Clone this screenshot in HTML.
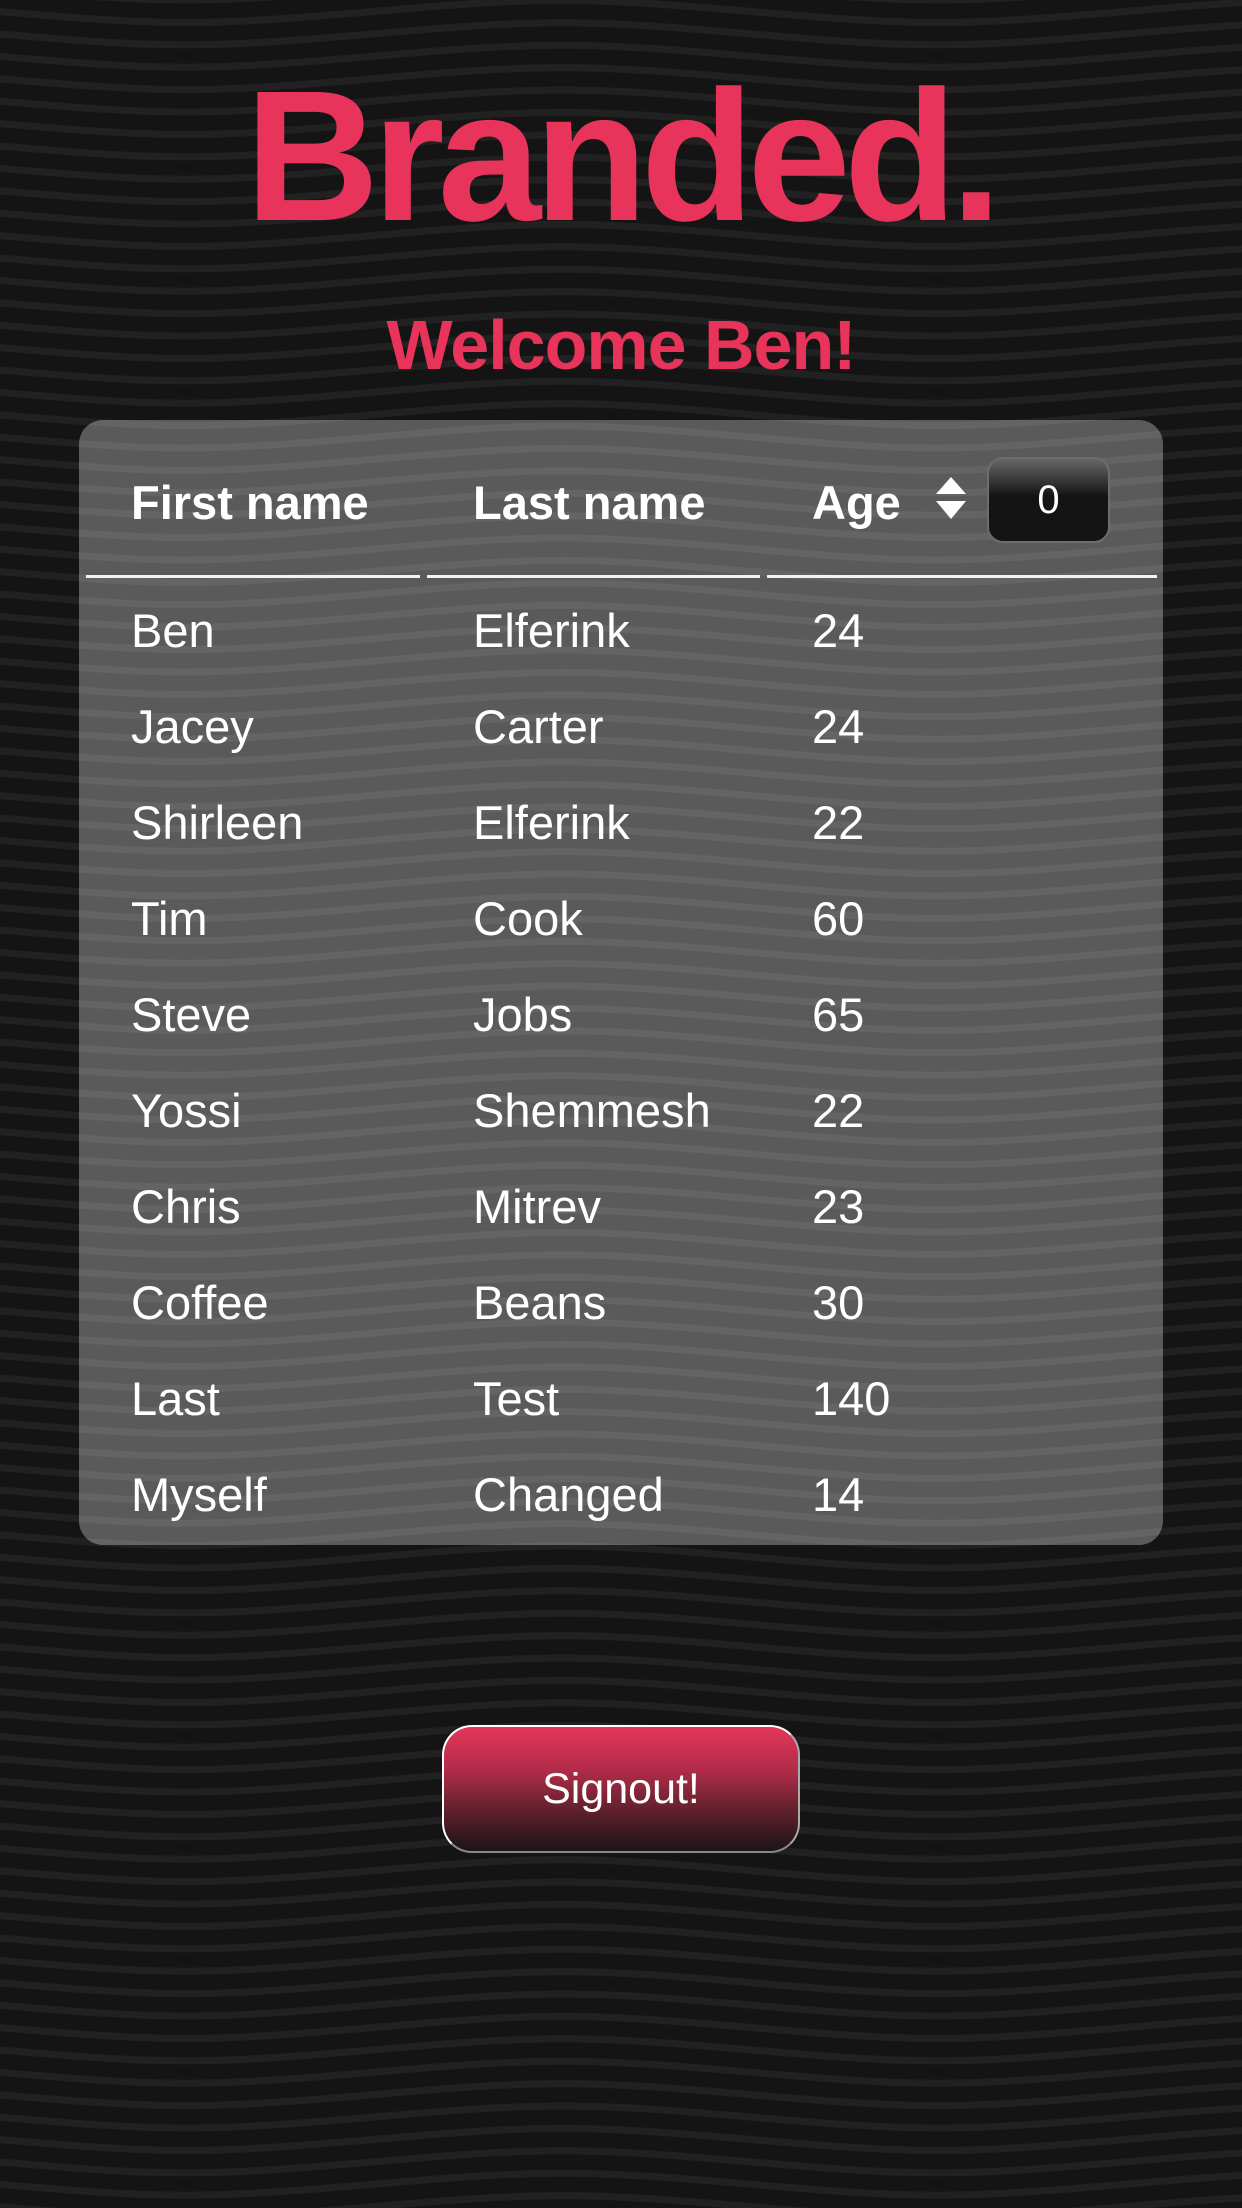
<!DOCTYPE html>
<html><head><meta charset="utf-8"><style>
html,body{margin:0;padding:0}
body{width:1242px;height:2208px;position:relative;overflow:hidden;background:#151415;font-family:"Liberation Sans",sans-serif;color:#fff}
svg.bg{position:absolute;left:0;top:0}
.logo{position:absolute;left:245px;top:67px;width:752px;height:180px;font-weight:bold;font-size:186px;line-height:180px;color:#e8345a;letter-spacing:-7px;white-space:nowrap}
.welcome{position:absolute;left:0;width:1242px;top:305px;text-align:center;font-weight:bold;font-size:70px;line-height:80px;color:#e8345a;letter-spacing:-1px}
.t{position:absolute;font-size:47px;line-height:50px;white-space:nowrap}
.h{font-weight:bold;font-size:47px}
.line{position:absolute;top:575px;height:3px;background:#f2f2f2}
.inp{position:absolute;left:987px;top:457px;width:123px;height:86px;border-radius:16px;border:2px solid #6d6d6d;box-sizing:border-box;background:linear-gradient(#666 0%,#3a3a3a 25%,#141414 45%,#141414 100%);font-size:40px;line-height:82px;text-align:center}
.btn{position:absolute;left:442px;top:1725px;width:358px;height:128px;box-sizing:border-box;border-radius:30px;border:2px solid #fff;border-bottom-color:#888;border-right-color:#aaa;background:linear-gradient(#e5365a 0%,#b02c48 35%,#5a1f2b 70%,#1a1517 100%);font-size:43px;line-height:124px;text-align:center}
</style></head><body>
<svg class="bg" width="1242" height="2208">
<defs>
<pattern id="w" width="752" height="224" patternUnits="userSpaceOnUse" patternTransform="translate(186,0)">
<g fill="none" stroke="#222122" stroke-width="7">
<path d="M0 0 C120 0 256 -22 376 -22 C496 -22 632 0 752 0"/>
<path d="M0 22.4 C120 22.4 256 0.4 376 0.4 C496 0.4 632 22.4 752 22.4"/>
<path d="M0 44.8 C120 44.8 256 22.8 376 22.8 C496 22.8 632 44.8 752 44.8"/>
<path d="M0 67.2 C120 67.2 256 45.2 376 45.2 C496 45.2 632 67.2 752 67.2"/>
<path d="M0 89.6 C120 89.6 256 67.6 376 67.6 C496 67.6 632 89.6 752 89.6"/>
<path d="M0 112 C120 112 256 90 376 90 C496 90 632 112 752 112"/>
<path d="M0 134.4 C120 134.4 256 112.4 376 112.4 C496 112.4 632 134.4 752 134.4"/>
<path d="M0 156.8 C120 156.8 256 134.8 376 134.8 C496 134.8 632 156.8 752 156.8"/>
<path d="M0 179.2 C120 179.2 256 157.2 376 157.2 C496 157.2 632 179.2 752 179.2"/>
<path d="M0 201.6 C120 201.6 256 179.6 376 179.6 C496 179.6 632 201.6 752 201.6"/>
<path d="M0 224 C120 224 256 202 376 202 C496 202 632 224 752 224"/>
<path d="M0 246.4 C120 246.4 256 224.4 376 224.4 C496 224.4 632 246.4 752 246.4"/>
</g>
</pattern>
</defs>
<rect width="1242" height="2208" fill="url(#w)"/>
<rect x="79" y="420" width="1084" height="1125" rx="24" fill="#fff" fill-opacity="0.3"/>
<polygon points="951,477 966,494 936,494" fill="#fff"/>
<polygon points="936,501 966,501 951,519" fill="#fff"/>
</svg>
<div class="logo">Branded.</div>
<div class="welcome">Welcome Ben!</div>

<div class="t h" style="left:131px;top:478px">First name</div>
<div class="t h" style="left:473px;top:478px">Last name</div>
<div class="t h" style="left:812px;top:478px">Age</div>
<div class="inp">0</div>
<div class="line" style="left:86px;width:334px"></div>
<div class="line" style="left:427px;width:333px"></div>
<div class="line" style="left:767px;width:390px"></div>

<div class="t" style="left:131px;top:606px">Ben</div><div class="t" style="left:473px;top:606px">Elferink</div><div class="t" style="left:812px;top:606px">24</div>
<div class="t" style="left:131px;top:702px">Jacey</div><div class="t" style="left:473px;top:702px">Carter</div><div class="t" style="left:812px;top:702px">24</div>
<div class="t" style="left:131px;top:798px">Shirleen</div><div class="t" style="left:473px;top:798px">Elferink</div><div class="t" style="left:812px;top:798px">22</div>
<div class="t" style="left:131px;top:894px">Tim</div><div class="t" style="left:473px;top:894px">Cook</div><div class="t" style="left:812px;top:894px">60</div>
<div class="t" style="left:131px;top:990px">Steve</div><div class="t" style="left:473px;top:990px">Jobs</div><div class="t" style="left:812px;top:990px">65</div>
<div class="t" style="left:131px;top:1086px">Yossi</div><div class="t" style="left:473px;top:1086px">Shemmesh</div><div class="t" style="left:812px;top:1086px">22</div>
<div class="t" style="left:131px;top:1182px">Chris</div><div class="t" style="left:473px;top:1182px">Mitrev</div><div class="t" style="left:812px;top:1182px">23</div>
<div class="t" style="left:131px;top:1278px">Coffee</div><div class="t" style="left:473px;top:1278px">Beans</div><div class="t" style="left:812px;top:1278px">30</div>
<div class="t" style="left:131px;top:1374px">Last</div><div class="t" style="left:473px;top:1374px">Test</div><div class="t" style="left:812px;top:1374px">140</div>
<div class="t" style="left:131px;top:1470px">Myself</div><div class="t" style="left:473px;top:1470px">Changed</div><div class="t" style="left:812px;top:1470px">14</div>

<div class="btn">Signout!</div>
</body></html>
